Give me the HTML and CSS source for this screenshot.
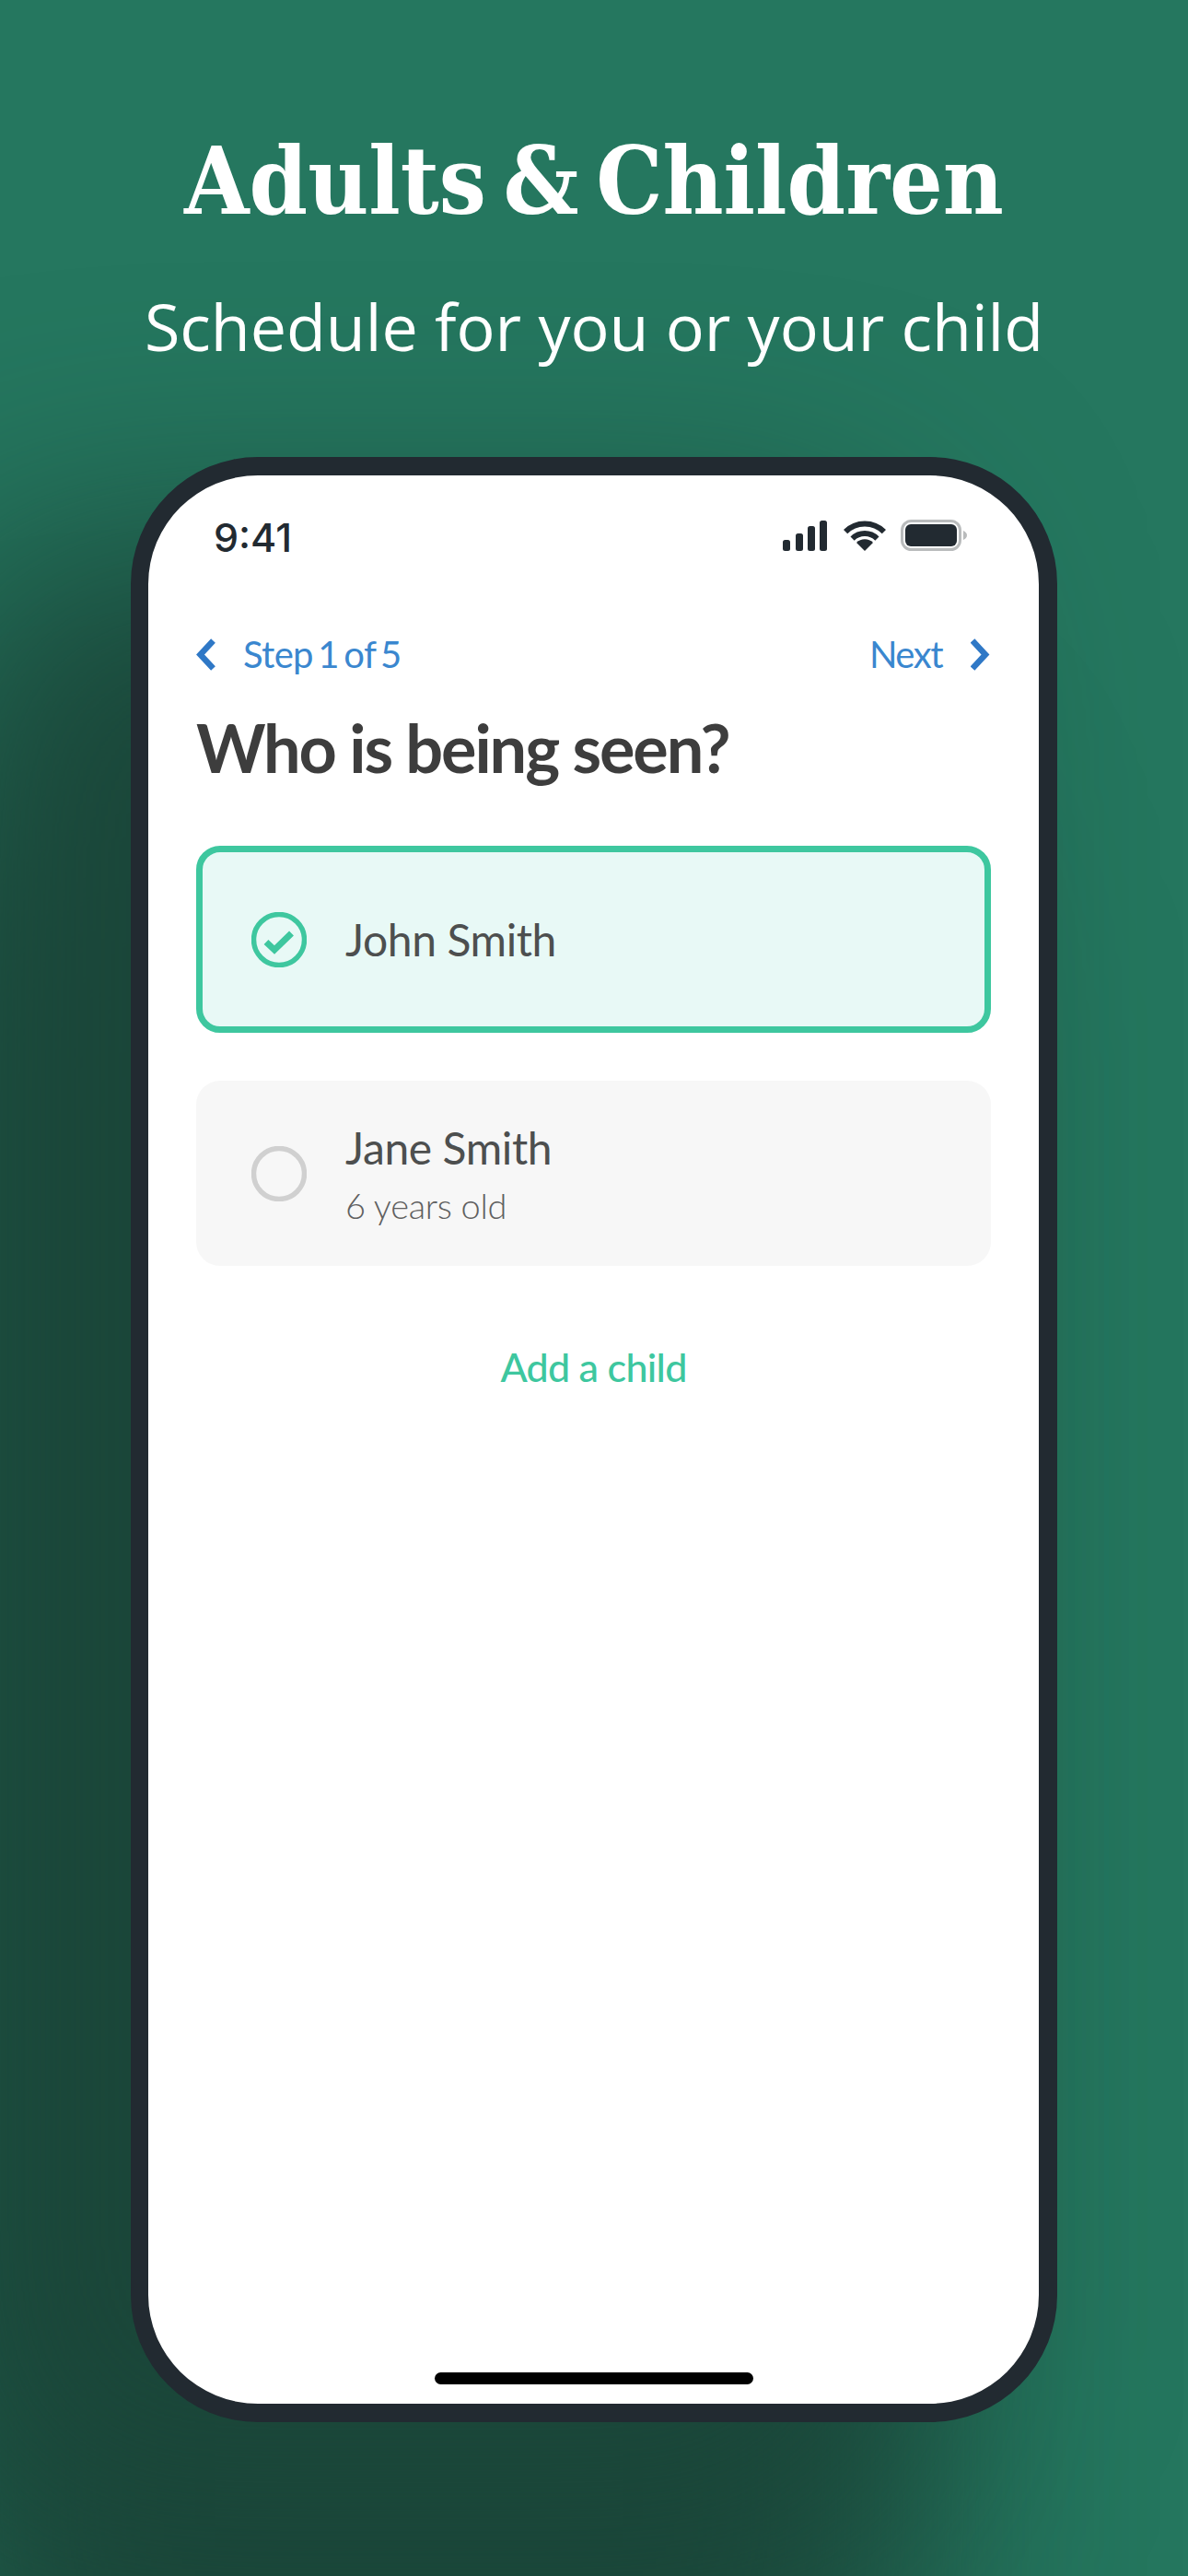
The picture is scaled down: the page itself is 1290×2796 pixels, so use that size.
FILE: index.html
```html
<!DOCTYPE html>
<html lang="en">
<head>
<meta charset="utf-8">
<title>Adults &amp; Children</title>
<link rel="stylesheet" href="styles.css">
</head>
<body>
<header class="hero">
  <h1 class="hero-title">Adults &amp; Children</h1>
  <p class="hero-sub">Schedule for you or your child</p>
</header>
<div class="phone">
  <div class="screen">
    <div class="status">
      <span class="time">9:41</span>
      <div class="status-icons">
        <svg class="ic-signal" width="48" height="33" viewBox="0 0 48 33"><rect x="0" y="21" width="8" height="12" rx="2.5"/><rect x="14" y="14" width="8" height="19" rx="2.5"/><rect x="27" y="6" width="8" height="27" rx="2.5"/><rect x="40" y="0" width="8" height="33" rx="2.5"/></svg>
        <svg class="ic-wifi" width="46" height="33" viewBox="0 0 46 33"><path d="M2.1 12.1A29.5 29.5 0 0 1 43.9 12.1M9.6 19.6A19 19 0 0 1 36.4 19.6" fill="none" stroke="#222a31" stroke-width="6"/><path d="M23 33L14 24A12.7 12.7 0 0 1 32 24Z" fill="#222a31"/></svg>
        <svg class="ic-batt" width="72" height="34" viewBox="0 0 72 34"><rect x="1.5" y="1.5" width="63" height="31" rx="10" fill="none" stroke="#b9bbbc" stroke-width="3"/><rect x="5" y="5" width="56" height="24" rx="6" fill="#222a31"/><path d="M68 12c2.5 1 4 3 4 5s-1.500 4-4 5z" fill="#b9bbbc"/></svg>
      </div>
    </div>
    <main class="content">
      <nav class="nav">
        <a class="nav-link nav-back"><svg class="chev" width="22" height="35" viewBox="0 0 22 35"><path d="M18.500 2.500L4.500 17.500L18.500 32.500"/></svg><span>Step 1 of 5</span></a>
        <a class="nav-link nav-next"><span>Next</span><svg class="chev" width="22" height="35" viewBox="0 0 22 35"><path d="M2 2.500L16 17.500L2 32.500"/></svg></a>
      </nav>
      <h2 class="question">Who is being seen?</h2>
      <div class="card card-on">
        <svg class="radio" width="60" height="60" viewBox="0 0 60 60"><circle cx="30" cy="30" r="27.500" fill="none" stroke="#3ec79f" stroke-width="5.500"/><path d="M16 32.500L25 41L43.500 23" fill="none" stroke="#3ec79f" stroke-width="7"/></svg>
        <div class="who"><div class="name">John Smith</div></div>
      </div>
      <div class="card card-off">
        <svg class="radio" width="60" height="60" viewBox="0 0 60 60"><circle cx="30" cy="30" r="27.500" fill="none" stroke="#d0d0d0" stroke-width="5.500"/></svg>
        <div class="who"><div class="name">Jane Smith</div><div class="age">6 years old</div></div>
      </div>
      <a class="add">Add a child</a>
    </main>
    <div class="home-bar"></div>
  </div>
</div>
</body>
</html>
```
FILE: styles.css
```css
* { box-sizing: border-box; }
html, body { margin: 0; padding: 0; }
body {
  width: 1290px;
  height: 2796px;
  overflow: hidden;
  background: #25775f;
}
.hero {
  height: 496px;
  padding-top: 138px;
  text-align: center;
  color: #fff;
}
.hero-title {
  margin: 0;
  font-family: "DejaVu Serif", serif;
  font-stretch: condensed;
  font-weight: 700;
  font-size: 101px;
  line-height: 118px;
  word-spacing: -13px;
}
.hero-sub {
  margin: 49px 0 0;
  font-family: "Open Sans", sans-serif;
  font-weight: 400;
  font-size: 70px;
  line-height: 98px;
}
.phone {
  width: 1006px;
  height: 2133px;
  margin: 0 auto;
  border: 20px solid #222a31;
  border-left-width: 19px;
  border-radius: 138px;
  background: #fff;
  box-shadow: -190px 114px 300px 20px #1b473a, -190px 400px 300px 20px #1b473a;
}
.screen {
  height: 100%;
  display: flex;
  flex-direction: column;
}
.status {
  display: flex;
  justify-content: space-between;
  align-items: center;
  height: 34px;
  margin-top: 48px;
  padding: 0 78px 0 71px;
}
.time {
  position: relative;
  top: 2px;
  font-family: Inter, sans-serif;
  font-weight: 500;
  font-size: 43px;
  line-height: 34px;
  color: #222a31;
}
.status-icons { display: flex; align-items: center; gap: 18px; }
.ic-signal { fill: #222a31; }
.ic-wifi { margin-right: -2px; }
.content {
  flex: 1;
  padding: 95px 52px 0;
  font-family: Lato, sans-serif;
}
.nav {
  display: flex;
  justify-content: space-between;
  align-items: center;
  height: 35px;
}
.nav-link {
  display: flex;
  align-items: center;
  gap: 29px;
  font-size: 40px;
  line-height: 35px;
  color: #3a87cf;
}
.nav-back { letter-spacing: -0.7px; word-spacing: -4px; }
.nav-next { gap: 31px; letter-spacing: -1.500px; }
.chev { fill: none; stroke: #2f78c6; stroke-width: 6.500; flex: none; }
.question {
  margin: 38px 0 0;
  font-weight: 700;
  font-size: 72px;
  line-height: 90px;
  letter-spacing: -2.100px;
  color: #3d3d3d;
}
.card {
  height: 201px;
  margin-top: 52px;
  display: flex;
  align-items: center;
  gap: 42px;
  padding-left: 60px;
  border-radius: 26px;
}
.question + .card { margin-top: 62px; height: 203px; }
.card-on {
  padding-left: 53px;
  background: #e8f9f6;
  border: 7px solid #3ec79f;
}
.card-off { background: #f7f7f7; }
.radio { flex: none; }
.name {
  font-size: 48px;
  line-height: 58px;
  letter-spacing: -0.400px;
  color: #4d4f4f;
}
.age {
  margin-top: 10px;
  font-size: 38px;
  font-weight: 300;
  line-height: 46px;
  letter-spacing: -0.300px;
  color: #5f6060;
}
.add {
  display: block;
  margin-top: 84px;
  text-align: center;
  font-size: 43px;
  font-weight: 500;
  line-height: 52px;
  letter-spacing: -0.700px;
  color: #3ec79f;
}
.home-bar {
  width: 346px;
  height: 13px;
  margin: 0 auto 21px;
  border-radius: 7px;
  background: #000;
}
```
